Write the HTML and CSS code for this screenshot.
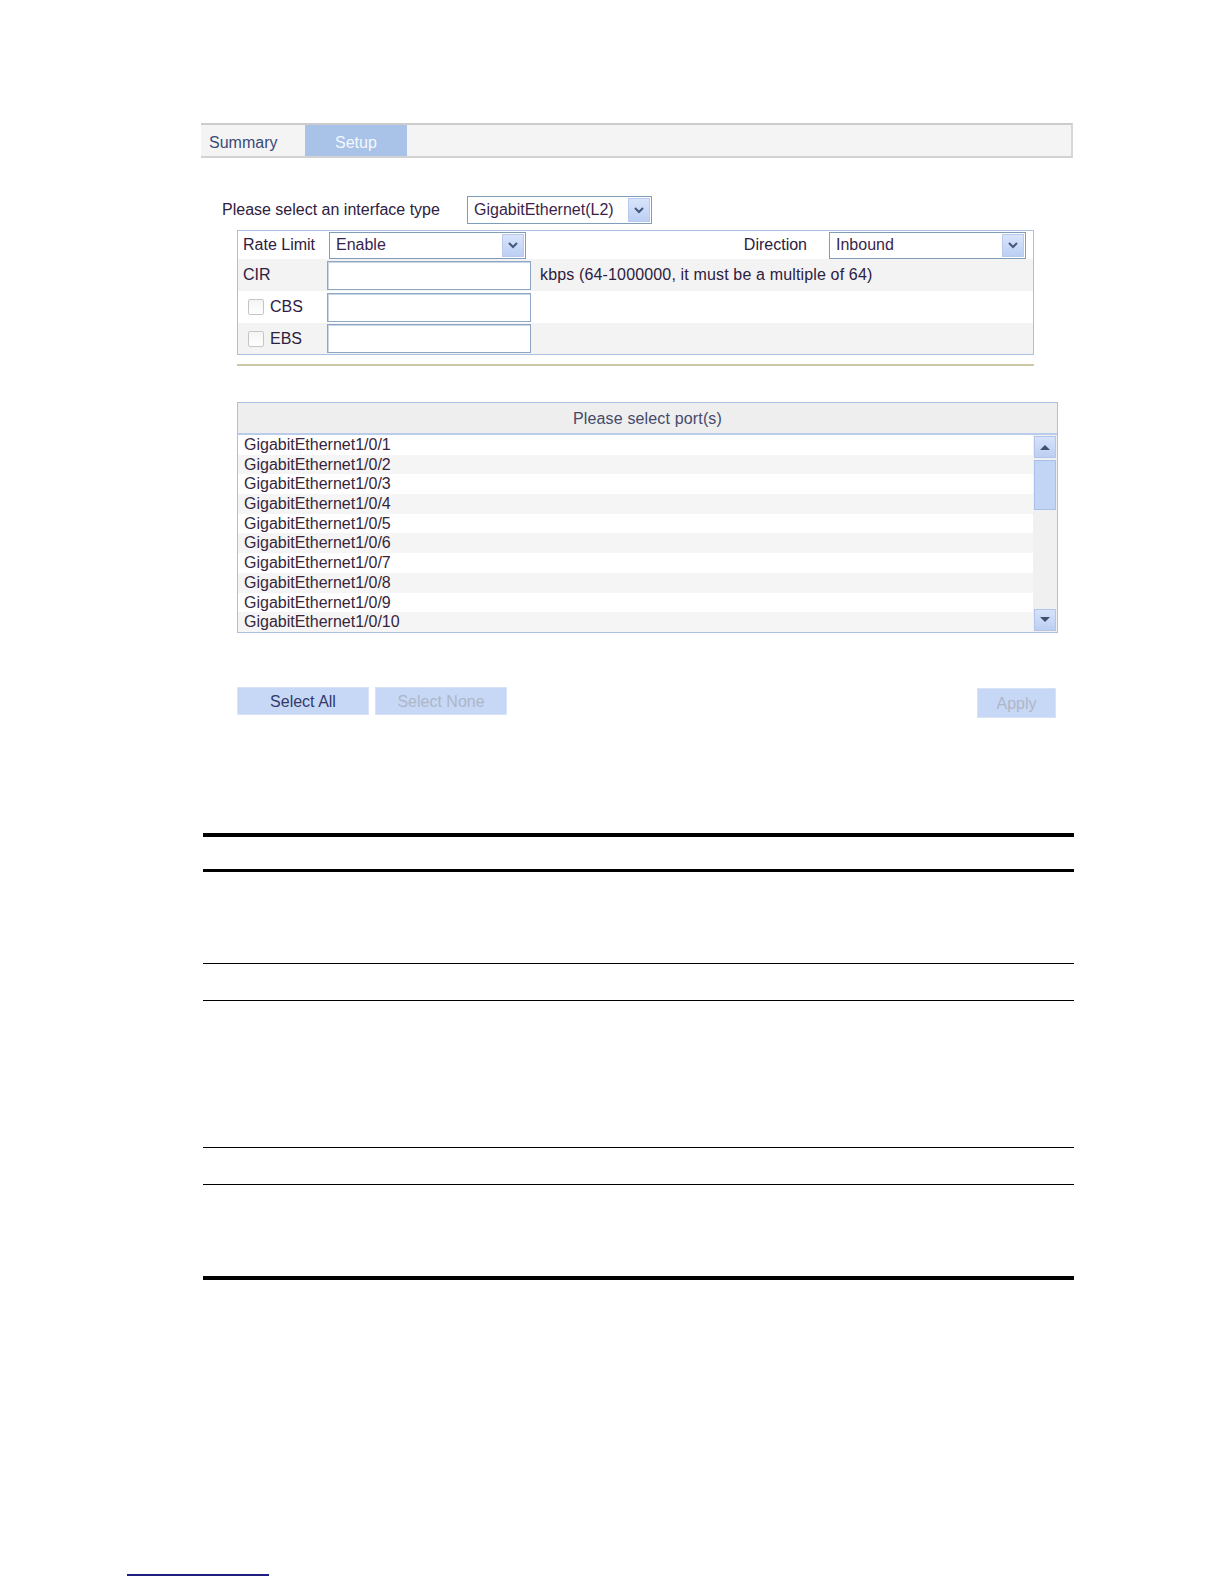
FILE: index.html
```html
<!DOCTYPE html>
<html>
<head>
<meta charset="utf-8">
<link rel="stylesheet" href="styles.css">
</head>
<body>
<div class="page">
  <div class="tabs">
    <div class="tab">Summary</div>
    <div class="tab active">Setup</div>
  </div>

  <div class="iftype">
    <span class="iflabel">Please select an interface type</span>
    <div class="select sel-if"><span class="val">GigabitEthernet(L2)</span><span class="dd"><svg width="12" height="8" viewBox="0 0 12 8"><polyline points="2,2 6,6 10,2" fill="none" stroke="#44597f" stroke-width="2"/></svg></span></div>
  </div>

  <div class="form">
    <div class="row r1">
      <span class="cell-label">Rate Limit</span>
      <div class="select sel-wide"><span class="val">Enable</span><span class="dd"><svg width="12" height="8" viewBox="0 0 12 8"><polyline points="2,2 6,6 10,2" fill="none" stroke="#44597f" stroke-width="2"/></svg></span></div>
      <span class="dir-label">Direction</span>
      <div class="select sel-wide"><span class="val">Inbound</span><span class="dd"><svg width="12" height="8" viewBox="0 0 12 8"><polyline points="2,2 6,6 10,2" fill="none" stroke="#44597f" stroke-width="2"/></svg></span></div>
    </div>
    <div class="row r2 alt">
      <span class="cell-label lbl-cir">CIR</span>
      <div class="input"></div>
      <span class="hint">kbps (64-1000000, it must be a multiple of 64)</span>
    </div>
    <div class="row r3">
      <span class="cell-label lbl-chk"><span class="chk"></span>CBS</span>
      <div class="input"></div>
    </div>
    <div class="row r4 alt">
      <span class="cell-label lbl-chk"><span class="chk"></span>EBS</span>
      <div class="input"></div>
    </div>
  </div>

  <div class="sep"></div>

  <div class="ports">
    <div class="ports-head">Please select port(s)</div>
    <div class="ports-body">
      <div class="list">
        <div class="item">GigabitEthernet1/0/1</div>
        <div class="item">GigabitEthernet1/0/2</div>
        <div class="item">GigabitEthernet1/0/3</div>
        <div class="item">GigabitEthernet1/0/4</div>
        <div class="item">GigabitEthernet1/0/5</div>
        <div class="item">GigabitEthernet1/0/6</div>
        <div class="item">GigabitEthernet1/0/7</div>
        <div class="item">GigabitEthernet1/0/8</div>
        <div class="item">GigabitEthernet1/0/9</div>
        <div class="item">GigabitEthernet1/0/10</div>
      </div>
      <div class="scrollbar">
        <div class="sb-btn"><svg width="12" height="8" viewBox="0 0 12 8"><polygon points="1,7 6,2 11,7" fill="#3f4f70"/></svg></div>
        <div class="sb-thumb"></div>
        <div class="sb-track"></div>
        <div class="sb-btn"><svg width="12" height="8" viewBox="0 0 12 8"><polygon points="1,1 6,6 11,1" fill="#3f4f70"/></svg></div>
      </div>
    </div>
  </div>

  <div class="btns">
    <div class="btn btn-all">Select All</div>
    <div class="btn btn-none disabled">Select None</div>
    <div class="btn btn-apply disabled">Apply</div>
  </div>

  <div class="doc-table">
    <div class="rule thick"></div>
    <div class="gap g1"></div>
    <div class="rule mid"></div>
    <div class="gap g2"></div>
    <div class="rule thin"></div>
    <div class="gap g3"></div>
    <div class="rule thin"></div>
    <div class="gap g4"></div>
    <div class="rule thin"></div>
    <div class="gap g3"></div>
    <div class="rule thin"></div>
    <div class="gap g5"></div>
    <div class="rule thick"></div>
  </div>
</div>
<div class="footer-link"></div>
</body>
</html>
```

FILE: styles.css
```css
* { box-sizing: border-box; }
html, body { margin: 0; padding: 0; background: #ffffff; }
body {
  font-family: "Liberation Sans", Arial, sans-serif;
  font-size: 16px;
  color: #2f2238;
}
.page {
  padding-top: 123px;
  margin-left: 201px;
  width: 872px;
}

/* tabs */
.tabs {
  display: flex;
  height: 35px;
  background: #f4f4f4;
  border-top: 2px solid #cccccc;
  border-bottom: 2px solid #d2d2d2;
  border-right: 2px solid #d8d8d8;
}
.tab {
  width: 102px;
  height: 31px;
  line-height: 36px;
  padding-left: 8px;
  color: #3b4a78;
  margin-right: 2px;
  background: #f4f4f4;
}
.tab.active {
  background: #a9c3e8;
  color: #f4f7ff;
  padding-left: 30px;
}

/* interface type */
.iftype {
  display: flex;
  align-items: center;
  margin-top: 38px;
  height: 28px;
  padding-left: 21px;
}
.iflabel { width: 245px; color: #2d2040; }
.select {
  display: flex;
  align-items: center;
  background: #fff;
  border: 1px solid #7f9db9;
  padding: 1px;
}
.select .val { flex: 1; padding-left: 5px; color: #3a1f4d; }
.select .dd {
  width: 22px;
  height: 100%;
  display: flex;
  align-items: center;
  justify-content: center;
  background: linear-gradient(#d9e4fb, #bccff4);
  border: 1px solid #b9caec;
}
.sel-if { width: 185px; height: 28px; }

/* form */
.form {
  margin-top: 6px;
  margin-left: 36px;
  width: 797px;
  border: 1px solid #aac0e2;
}
.row {
  display: flex;
  align-items: center;
}
.row.alt { background: #f3f3f3; }
.r1 { height: 28px; padding-right: 7px; }
.r2 { height: 32px; }
.r3 { height: 32px; }
.r4 { height: 31px; }
.cell-label {
  width: 91px;
  padding-left: 5px;
  display: flex;
  align-items: center;
  color: #2d2040;
}
.lbl-cir, .lbl-chk { width: 89px; }
.lbl-chk { padding-left: 10px; }
.sel-wide { width: 197px; height: 27px; }
.dir-label { margin-left: auto; margin-right: 22px; color: #2d2040; }
.input {
  width: 204px;
  height: 29px;
  background: #fff;
  border: 1px solid #8ea6c4;
  box-shadow: inset 1px 1px 0 #c9d6e6;
}
.hint { margin-left: 9px; color: #2d2040; letter-spacing: 0.15px; }
.chk {
  width: 16px;
  height: 16px;
  border: 1px solid #c6c6c6;
  border-radius: 2px;
  background: linear-gradient(#f4f4f4, #ffffff);
  margin-right: 6px;
}

.sep {
  margin-top: 9px;
  margin-left: 36px;
  width: 797px;
  height: 2px;
  background: #cdc8a8;
}

/* ports */
.ports {
  margin-top: 36px;
  margin-left: 36px;
  width: 821px;
  height: 231px;
  border: 1px solid #aac0e2;
}
.ports-head {
  height: 32px;
  line-height: 31px;
  text-align: center;
  background: #eeeeee;
  border-bottom: 2px solid #b9cdea;
  color: #45496a;
  letter-spacing: 0.15px;
}
.ports-body {
  display: flex;
  height: 197px;
}
.list { flex: 1; }
.item {
  height: 19.7px;
  line-height: 19.7px;
  padding-left: 6px;
  color: #36253c;
}
.item:nth-child(even) { background: #f5f5f5; }
.scrollbar {
  width: 24px;
  display: flex;
  flex-direction: column;
  background: #f0f0f0;
  padding: 1px;
}
.sb-btn {
  height: 22px;
  display: flex;
  align-items: center;
  justify-content: center;
  background: linear-gradient(#d6e2fa, #bccff2);
  border: 1px solid #b2c6ea;
}
.sb-thumb {
  margin-top: 2px;
  height: 50px;
  background: #c3d5f4;
  border: 1px solid #a9c0ea;
}
.sb-track { flex: 1; }

/* buttons */
.btns {
  display: flex;
  align-items: flex-start;
  margin-top: 54px;
  padding-left: 36px;
}
.btn {
  height: 28px;
  line-height: 28px;
  text-align: center;
  background: #c7d8f6;
  border: 1px solid #d8e3f8;
  color: #33396b;
}
.btn-all { width: 132px; }
.btn-none { width: 132px; margin-left: 6px; }
.btn-apply { width: 79px; height: 30px; line-height: 30px; margin-left: auto; margin-right: 17px; margin-top: 1px; }
.btn.disabled { color: #aeb6c6; }

/* document table rules */
.doc-table {
  margin-top: 115px;
  margin-left: 2px;
  width: 871px;
}
.rule { background: #000; }
.rule.thick { height: 4px; }
.rule.mid { height: 3px; }
.rule.thin { height: 1px; }
.gap.g1 { height: 32px; }
.gap.g2 { height: 91px; }
.gap.g3 { height: 36px; }
.gap.g4 { height: 146px; }
.gap.g5 { height: 91px; }

.footer-link {
  margin-top: 294px;
  margin-left: 127px;
  width: 142px;
  height: 2px;
  background: #1e1e80;
}
```
